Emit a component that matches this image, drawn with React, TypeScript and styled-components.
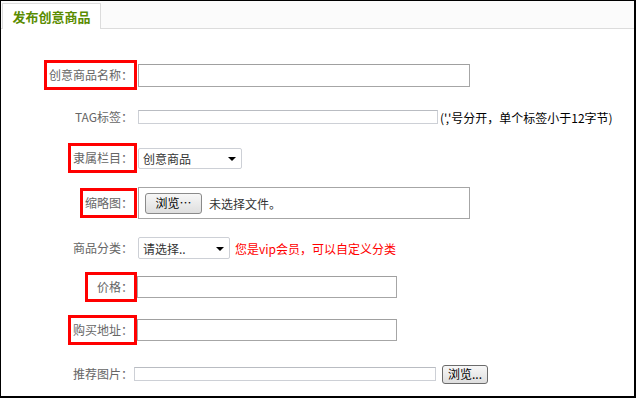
import styled, { createGlobalStyle } from "styled-components";

const GlobalStyle = createGlobalStyle`
  html, body {
    margin: 0;
    padding: 0;
    background: #fff;
  }
  body {
    font-family: "Noto Sans CJK SC", "Liberation Sans", sans-serif;
    font-size: 12px;
  }
`;

const Panel = styled.div`
  width: 636px;
  height: 398px;
  box-sizing: border-box;
  border: 1px solid #000;
  border-right-width: 2px;
  border-bottom-width: 2px;
  background: #fff;
  overflow: hidden;
`;

const TabBar = styled.div`
  height: 27px;
  border-bottom: 1px solid #dcdcdc;
  background: #fbfbfb;
  display: flex;
  align-items: flex-end;
  padding-left: 1px;
`;

const Tab = styled.div`
  width: 97px;
  height: 25px;
  margin-bottom: -1px;
  border: 1px solid #dcdcdc;
  border-bottom: none;
  background: #fff;
  display: flex;
  align-items: center;
  justify-content: center;
  color: #5a8c00;
  font-size: 13px;
  font-weight: bold;
`;

const Form = styled.div`
  padding-top: 25px;
  display: flex;
  flex-direction: column;
`;

const Row = styled.div<{ $h: number }>`
  height: ${(p) => p.$h}px;
  display: flex;
  align-items: center;
`;

const LabelCell = styled.div`
  width: 136px;
  flex: none;
  display: flex;
  justify-content: flex-end;
`;

const Label = styled.span<{ $marked?: boolean; $padL?: number }>`
  border: 3px solid ${(p) => (p.$marked ? "#ff0000" : "transparent")};
  padding: 4px 1px 4px ${(p) => p.$padL ?? 2}px;
  line-height: 16px;
  color: #666;
  font-size: 12px;
  white-space: nowrap;
`;

const Field = styled.div<{ $offset?: number }>`
  display: flex;
  align-items: center;
  margin-left: ${(p) => p.$offset ?? 1}px;
`;

const TextInput = styled.input<{ $w: number; $h: number; $light?: boolean }>`
  width: ${(p) => p.$w}px;
  height: ${(p) => p.$h}px;
  box-sizing: border-box;
  margin: 0;
  padding: 0 3px;
  border: 1px solid ${(p) => (p.$light ? "#cdd0d6" : "#a6a6a6")};
  border-top-color: ${(p) => (p.$light ? "#b9bcc2" : "#a0a0a0")};
  background: #fff;
  outline: none;
  font: inherit;
`;

const Note = styled.span<{ $red?: boolean }>`
  margin-left: ${(p) => (p.$red ? 5 : 2)}px;
  color: ${(p) => (p.$red ? "#ff0000" : "#000")};
  font-size: 12px;
  white-space: nowrap;
`;

const Select = styled.div<{ $w: number; $h: number }>`
  width: ${(p) => p.$w}px;
  height: ${(p) => p.$h}px;
  box-sizing: border-box;
  border: 1px solid #cdd0d6;
  border-radius: 2px;
  background: #fff;
  display: flex;
  align-items: center;
  justify-content: space-between;
  padding: 0 5px 0 4px;
  color: #333;
  font-size: 12px;
`;

const Caret = styled.span`
  width: 0;
  height: 0;
  border-left: 4px solid transparent;
  border-right: 4px solid transparent;
  border-top: 4px solid #000;
  margin-top: 1px;
`;

const FileBox = styled.div`
  width: 332px;
  height: 32px;
  box-sizing: border-box;
  border: 1px solid #a6a6a6;
  display: flex;
  align-items: center;
  padding-left: 6px;
  gap: 7px;
  color: #333;
`;

const BrowseButton = styled.button<{ $w: number; $h: number; $dark?: boolean; $gap?: number }>`
  width: ${(p) => p.$w}px;
  height: ${(p) => p.$h}px;
  box-sizing: border-box;
  margin: 0 0 0 ${(p) => p.$gap ?? 0}px;
  padding: 0;
  border: 1px solid ${(p) => (p.$dark ? "#6b6b6b" : "#8a8a8a")};
  border-radius: 3px;
  background: linear-gradient(#f7f7f7, #dedede);
  color: #000;
  font: inherit;
  font-size: 12px;
  line-height: 1;
  display: flex;
  align-items: center;
  justify-content: center;
`;

export default function App() {
  return (
    <>
      <GlobalStyle />
      <Panel>
        <TabBar>
          <Tab>发布创意商品</Tab>
        </TabBar>
        <Form>
          <Row $h={42}>
            <LabelCell>
              <Label $marked>创意商品名称：</Label>
            </LabelCell>
            <Field>
              <TextInput $w={332} $h={23} />
            </Field>
          </Row>
          <Row $h={42}>
            <LabelCell>
              <Label>TAG标签：</Label>
            </LabelCell>
            <Field>
              <TextInput $w={300} $h={14} $light />
              <Note>(','号分开，单个标签小于12字节)</Note>
            </Field>
          </Row>
          <Row $h={40}>
            <LabelCell>
              <Label $marked>隶属栏目：</Label>
            </LabelCell>
            <Field>
              <Select $w={104} $h={21}>
                <span>创意商品</span>
                <Caret />
              </Select>
            </Field>
          </Row>
          <Row $h={50}>
            <LabelCell>
              <Label $marked>缩略图：</Label>
            </LabelCell>
            <Field>
              <FileBox>
                <BrowseButton $w={57} $h={21}>浏览…</BrowseButton>
                <span>未选择文件。</span>
              </FileBox>
            </Field>
          </Row>
          <Row $h={40}>
            <LabelCell>
              <Label>商品分类：</Label>
            </LabelCell>
            <Field>
              <Select $w={92} $h={22}>
                <span>请选择..</span>
                <Caret />
              </Select>
              <Note $red>您是vip会员，可以自定义分类</Note>
            </Field>
          </Row>
          <Row $h={38}>
            <LabelCell>
              <Label $marked $padL={9}>价格：</Label>
            </LabelCell>
            <Field $offset={0}>
              <TextInput $w={260} $h={22} />
            </Field>
          </Row>
          <Row $h={48}>
            <LabelCell>
              <Label $marked>购买地址：</Label>
            </LabelCell>
            <Field $offset={0}>
              <TextInput $w={260} $h={22} />
            </Field>
          </Row>
          <Row $h={40}>
            <LabelCell>
              <Label>推荐图片：</Label>
            </LabelCell>
            <Field $offset={-3}>
              <TextInput $w={302} $h={14} $light />
              <BrowseButton $w={46} $h={19} $dark $gap={6}>
                浏览...
              </BrowseButton>
            </Field>
          </Row>
        </Form>
      </Panel>
    </>
  );
}
